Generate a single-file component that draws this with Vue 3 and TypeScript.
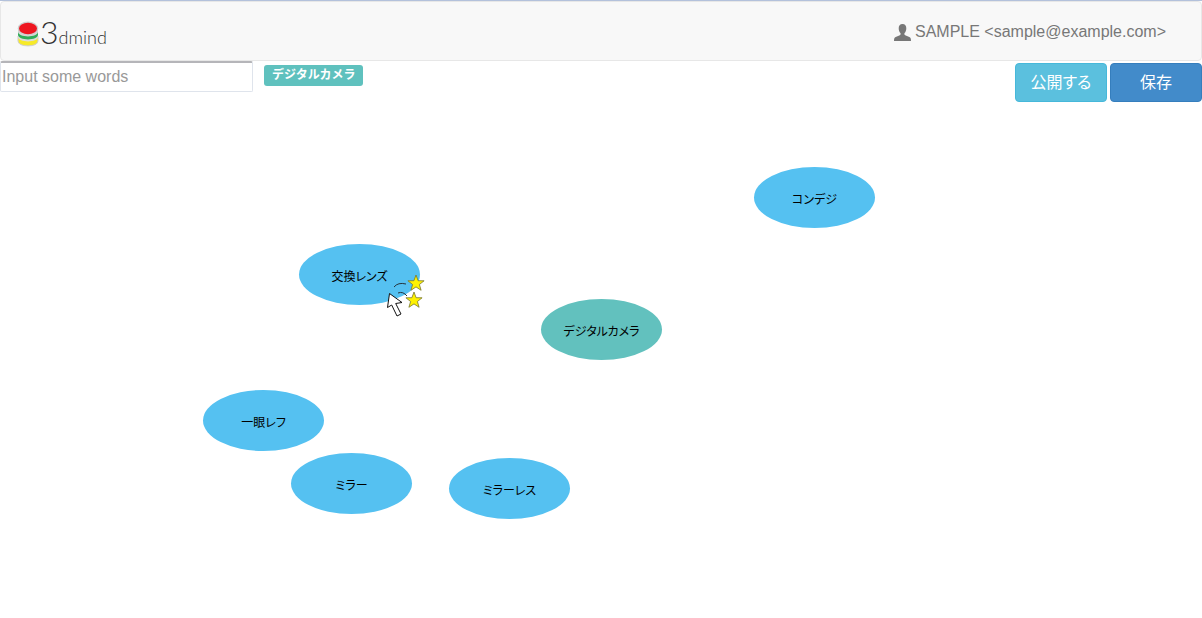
<script setup lang="ts">
import { ref } from 'vue'

interface MapNode {
  label: string
  x: number
  y: number
  root?: boolean
}

const words = ref('')

const nodes: MapNode[] = [
  { label: 'コンデジ', x: 754, y: 106 },
  { label: '交換レンズ', x: 299, y: 183 },
  { label: 'デジタルカメラ', x: 541, y: 238, root: true },
  { label: '一眼レフ', x: 203, y: 329 },
  { label: 'ミラー', x: 291, y: 392 },
  { label: 'ミラーレス', x: 449, y: 397 },
]
</script>

<template>
  <div class="page">
    <header class="navbar">
      <a class="brand" href="#">
        <svg class="brand-mark" width="22" height="26" viewBox="0 0 22 26" aria-hidden="true">
          <path d="M1 15v5c0 6.500 20 6.500 20 0v-5z" fill="#f7ea28" stroke="#cfcfcf" />
          <path d="M1 12v3.500c0 6.500 20 6.500 20 0V12z" fill="#dcdcdc" />
          <path d="M1 10v3.500c0 6.500 20 6.500 20 0V10z" fill="#2fad58" />
          <path d="M1 7v3.500c0 6.500 20 6.500 20 0V7z" fill="#d6d6d6" />
          <ellipse cx="11" cy="7.500" rx="10.300" ry="7" fill="#cfcfcf" />
          <ellipse cx="11" cy="7.500" rx="9" ry="5.700" fill="#ee1620" />
        </svg>
        <span class="brand-text"><span class="brand-three">3</span>dmind</span>
      </a>
      <a class="account" href="#">
        <svg width="17" height="17" viewBox="0 0 17 17" aria-hidden="true">
          <path
            d="M8.500 0C5.900 0 4.700 1.700 4.700 4.200c0 2 .7 3.700 1.700 4.900.5.800.3 1.800-.6 2.200L1.700 13C.4 13.600 0 14.500 0 17h17c0-2.500-.4-3.400-1.700-4l-4.100-1.700c-.9-.4-1.100-1.400-.6-2.200 1-1.200 1.700-2.900 1.700-4.900C12.300 1.700 11.100 0 8.500 0z"
            fill="#777"
          />
        </svg>
        <span>SAMPLE &lt;sample@example.com&gt;</span>
      </a>
    </header>

    <main class="workspace">
      <div class="toolbar">
        <input v-model="words" class="words" type="text" placeholder="Input some words" aria-label="Input some words" />
        <span class="tag">デジタルカメラ</span>
        <div class="actions">
          <button class="btn publish" type="button">公開する</button>
          <button class="btn save" type="button">保存</button>
        </div>
      </div>

      <div
        v-for="node in nodes"
        :key="node.label"
        class="node"
        :class="{ root: node.root }"
        :style="{ left: node.x + 'px', top: node.y + 'px' }"
      >
        {{ node.label }}
      </div>

      <svg class="pointer" width="40" height="44" viewBox="0 0 40 44" aria-hidden="true">
        <g fill="none" stroke="#26353d">
          <path d="M9 13q4-5 12-3" />
          <path d="M13 19q5-2 9 3" />
        </g>
        <g fill="#fff200" stroke="#77772f" stroke-width=".8">
          <path d="M31 1l2.100 5.700 6 .1-4.700 3.700 1.700 5.800-5.100-3.400-5.100 3.400 1.700-5.800-4.700-3.700 6-.1z" />
          <path d="M29 18l2.100 5.700 6 .1-4.700 3.700 1.700 5.800-5.100-3.400-5.100 3.400 1.700-5.800-4.700-3.700 6-.1z" />
        </g>
        <path d="M4.500 19.500l-2 14 4.200-2.500 5.300 11 4-2-5.300-10.500 6.300-1z" fill="#fff" stroke="#111" />
      </svg>
    </main>
  </div>
</template>

<style>
body {
  margin: 0;
  background: #fff;
}
</style>

<style scoped>
.page {
  display: flex;
  flex-direction: column;
  min-height: 100vh;
  overflow: hidden;
  border-top: 1px solid #b3c1db;
  box-sizing: border-box;
  font-family: "Liberation Sans", "Noto Sans CJK JP", sans-serif;
  font-size: 16px;
}

.navbar {
  display: flex;
  align-items: center;
  justify-content: space-between;
  height: 60px;
  padding: 2px 35px 0 16px;
  box-sizing: border-box;
  background: #f8f8f8;
  border: 1px solid #e7e7e7;
  border-radius: 4px;
}

.brand {
  display: flex;
  align-items: center;
  gap: 1px;
  padding-top: 4px;
  color: #333;
  text-decoration: none;
}

.brand-text {
  font-family: Lato, sans-serif;
  font-size: 18px;
  font-weight: 300;
  line-height: 32px;
}

.brand-three {
  font-size: 32px;
}

.account {
  display: flex;
  align-items: center;
  gap: 4px;
  color: #777;
  text-decoration: none;
}

.workspace {
  position: relative;
  flex: 1;
}

.toolbar {
  display: flex;
  align-items: flex-start;
}

.words {
  width: 253px;
  height: 31px;
  padding: 0 1px;
  box-sizing: border-box;
  border: 1px solid #dfe4ec;
  border-top: 2px solid #b5b5b9;
  border-radius: 2px;
  background: #fff;
  color: #333;
  font: inherit;
}

.words::placeholder {
  color: #999;
  opacity: 1;
}

.tag {
  margin: 4px 0 0 11px;
  padding: 0 8px 1px;
  border-radius: 3px;
  background: #5fc1be;
  color: #fff;
  font-size: 12px;
  font-weight: 700;
  line-height: 20px;
}

.actions {
  display: flex;
  gap: 3px;
  margin: 2px 0 0 auto;
}

.btn {
  width: 92px;
  height: 39px;
  padding: 0 0 3px;
  border: 1px solid;
  border-radius: 4px;
  color: #fff;
  font: inherit;
  font-feature-settings: "palt";
}

.publish {
  border-color: #46b8da;
  background: #5bc0de;
}

.save {
  border-color: #357ebd;
  background: #428bca;
}

.node {
  position: absolute;
  display: flex;
  align-items: center;
  justify-content: center;
  width: 121px;
  height: 61px;
  padding-top: 2px;
  box-sizing: border-box;
  border-radius: 50%;
  background: #55c1f1;
  color: #000;
  font-size: 12px;
  font-feature-settings: "palt";
}

.root {
  background: #62c1be;
}

.pointer {
  position: absolute;
  left: 385px;
  top: 213px;
}
</style>
